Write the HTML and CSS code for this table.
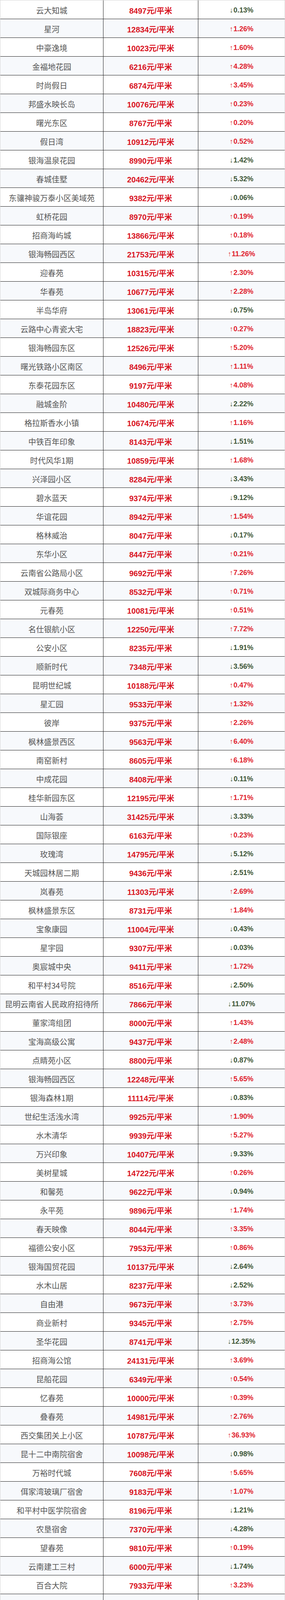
FILE: index.html
```html
<!DOCTYPE html>
<html lang="zh-CN">
<head>
<meta charset="utf-8">
<title>小区房价</title>
<link rel="stylesheet" href="styles.css">
</head>
<body>
<div class="table">
<div class="row"><div class="name">云大知城</div><div class="price">8497元/平米</div><div class="chg dn"><span class="arr">↓</span>0.13%</div></div>
<div class="row"><div class="name">星河</div><div class="price">12834元/平米</div><div class="chg up"><span class="arr">↑</span>1.26%</div></div>
<div class="row"><div class="name">中豪逸境</div><div class="price">10023元/平米</div><div class="chg up"><span class="arr">↑</span>1.60%</div></div>
<div class="row"><div class="name">金福地花园</div><div class="price">6216元/平米</div><div class="chg up"><span class="arr">↑</span>4.28%</div></div>
<div class="row"><div class="name">时尚假日</div><div class="price">6874元/平米</div><div class="chg up"><span class="arr">↑</span>3.45%</div></div>
<div class="row"><div class="name">邦盛水映长岛</div><div class="price">10076元/平米</div><div class="chg up"><span class="arr">↑</span>0.23%</div></div>
<div class="row"><div class="name">曙光东区</div><div class="price">8767元/平米</div><div class="chg up"><span class="arr">↑</span>0.20%</div></div>
<div class="row"><div class="name">假日湾</div><div class="price">10912元/平米</div><div class="chg up"><span class="arr">↑</span>0.52%</div></div>
<div class="row"><div class="name">银海温泉花园</div><div class="price">8990元/平米</div><div class="chg dn"><span class="arr">↓</span>1.42%</div></div>
<div class="row"><div class="name">春城佳墅</div><div class="price">20462元/平米</div><div class="chg dn"><span class="arr">↓</span>5.32%</div></div>
<div class="row"><div class="name">东骧神骏万泰小区美域苑</div><div class="price">9382元/平米</div><div class="chg dn"><span class="arr">↓</span>0.06%</div></div>
<div class="row"><div class="name">虹桥花园</div><div class="price">8970元/平米</div><div class="chg up"><span class="arr">↑</span>0.19%</div></div>
<div class="row"><div class="name">招商海屿城</div><div class="price">13866元/平米</div><div class="chg up"><span class="arr">↑</span>0.18%</div></div>
<div class="row"><div class="name">银海畅园西区</div><div class="price">21753元/平米</div><div class="chg up"><span class="arr">↑</span>11.26%</div></div>
<div class="row"><div class="name">迎春苑</div><div class="price">10315元/平米</div><div class="chg up"><span class="arr">↑</span>2.30%</div></div>
<div class="row"><div class="name">华春苑</div><div class="price">10677元/平米</div><div class="chg up"><span class="arr">↑</span>2.28%</div></div>
<div class="row"><div class="name">半岛华府</div><div class="price">13061元/平米</div><div class="chg dn"><span class="arr">↓</span>0.75%</div></div>
<div class="row"><div class="name">云路中心青瓷大宅</div><div class="price">18823元/平米</div><div class="chg up"><span class="arr">↑</span>0.27%</div></div>
<div class="row"><div class="name">银海畅园东区</div><div class="price">12526元/平米</div><div class="chg up"><span class="arr">↑</span>5.20%</div></div>
<div class="row"><div class="name">曙光铁路小区南区</div><div class="price">8496元/平米</div><div class="chg up"><span class="arr">↑</span>1.11%</div></div>
<div class="row"><div class="name">东泰花园东区</div><div class="price">9197元/平米</div><div class="chg up"><span class="arr">↑</span>4.08%</div></div>
<div class="row"><div class="name">融城金阶</div><div class="price">10480元/平米</div><div class="chg dn"><span class="arr">↓</span>2.22%</div></div>
<div class="row"><div class="name">格拉斯香水小镇</div><div class="price">10674元/平米</div><div class="chg up"><span class="arr">↑</span>1.16%</div></div>
<div class="row"><div class="name">中铁百年印象</div><div class="price">8143元/平米</div><div class="chg dn"><span class="arr">↓</span>1.51%</div></div>
<div class="row"><div class="name">时代风华1期</div><div class="price">10859元/平米</div><div class="chg up"><span class="arr">↑</span>1.68%</div></div>
<div class="row"><div class="name">兴泽园小区</div><div class="price">8284元/平米</div><div class="chg dn"><span class="arr">↓</span>3.43%</div></div>
<div class="row"><div class="name">碧水蓝天</div><div class="price">9374元/平米</div><div class="chg dn"><span class="arr">↓</span>9.12%</div></div>
<div class="row"><div class="name">华谊花园</div><div class="price">8942元/平米</div><div class="chg up"><span class="arr">↑</span>1.54%</div></div>
<div class="row"><div class="name">格林威治</div><div class="price">8047元/平米</div><div class="chg dn"><span class="arr">↓</span>0.17%</div></div>
<div class="row"><div class="name">东华小区</div><div class="price">8447元/平米</div><div class="chg up"><span class="arr">↑</span>0.21%</div></div>
<div class="row"><div class="name">云南省公路局小区</div><div class="price">9692元/平米</div><div class="chg up"><span class="arr">↑</span>7.26%</div></div>
<div class="row"><div class="name">双城际商务中心</div><div class="price">8532元/平米</div><div class="chg up"><span class="arr">↑</span>0.71%</div></div>
<div class="row"><div class="name">元春苑</div><div class="price">10081元/平米</div><div class="chg up"><span class="arr">↑</span>0.51%</div></div>
<div class="row"><div class="name">名仕银航小区</div><div class="price">12250元/平米</div><div class="chg up"><span class="arr">↑</span>7.72%</div></div>
<div class="row"><div class="name">公安小区</div><div class="price">8235元/平米</div><div class="chg dn"><span class="arr">↓</span>1.91%</div></div>
<div class="row"><div class="name">顺新时代</div><div class="price">7348元/平米</div><div class="chg dn"><span class="arr">↓</span>3.56%</div></div>
<div class="row"><div class="name">昆明世纪城</div><div class="price">10188元/平米</div><div class="chg up"><span class="arr">↑</span>0.47%</div></div>
<div class="row"><div class="name">星汇园</div><div class="price">9533元/平米</div><div class="chg up"><span class="arr">↑</span>1.32%</div></div>
<div class="row"><div class="name">彼岸</div><div class="price">9375元/平米</div><div class="chg up"><span class="arr">↑</span>2.26%</div></div>
<div class="row"><div class="name">枫林盛景西区</div><div class="price">9563元/平米</div><div class="chg up"><span class="arr">↑</span>6.40%</div></div>
<div class="row"><div class="name">南窑新村</div><div class="price">8605元/平米</div><div class="chg up"><span class="arr">↑</span>6.18%</div></div>
<div class="row"><div class="name">中成花园</div><div class="price">8408元/平米</div><div class="chg dn"><span class="arr">↓</span>0.11%</div></div>
<div class="row"><div class="name">桂华新园东区</div><div class="price">12195元/平米</div><div class="chg up"><span class="arr">↑</span>1.71%</div></div>
<div class="row"><div class="name">山海荟</div><div class="price">31425元/平米</div><div class="chg dn"><span class="arr">↓</span>3.33%</div></div>
<div class="row"><div class="name">国际银座</div><div class="price">6163元/平米</div><div class="chg up"><span class="arr">↑</span>0.23%</div></div>
<div class="row"><div class="name">玫瑰湾</div><div class="price">14795元/平米</div><div class="chg dn"><span class="arr">↓</span>5.12%</div></div>
<div class="row"><div class="name">天城园林居二期</div><div class="price">9436元/平米</div><div class="chg dn"><span class="arr">↓</span>2.51%</div></div>
<div class="row"><div class="name">岚春苑</div><div class="price">11303元/平米</div><div class="chg up"><span class="arr">↑</span>2.69%</div></div>
<div class="row"><div class="name">枫林盛景东区</div><div class="price">8731元/平米</div><div class="chg up"><span class="arr">↑</span>1.84%</div></div>
<div class="row"><div class="name">宝象康园</div><div class="price">11004元/平米</div><div class="chg dn"><span class="arr">↓</span>0.43%</div></div>
<div class="row"><div class="name">星宇园</div><div class="price">9307元/平米</div><div class="chg dn"><span class="arr">↓</span>0.03%</div></div>
<div class="row"><div class="name">奥宸城中央</div><div class="price">9411元/平米</div><div class="chg up"><span class="arr">↑</span>1.72%</div></div>
<div class="row"><div class="name">和平村34号院</div><div class="price">8516元/平米</div><div class="chg dn"><span class="arr">↓</span>2.50%</div></div>
<div class="row"><div class="name">昆明云南省人民政府招待所</div><div class="price">7866元/平米</div><div class="chg dn"><span class="arr">↓</span>11.07%</div></div>
<div class="row"><div class="name">董家湾组团</div><div class="price">8000元/平米</div><div class="chg up"><span class="arr">↑</span>1.43%</div></div>
<div class="row"><div class="name">宝海高级公寓</div><div class="price">9437元/平米</div><div class="chg up"><span class="arr">↑</span>2.48%</div></div>
<div class="row"><div class="name">点睛苑小区</div><div class="price">8800元/平米</div><div class="chg dn"><span class="arr">↓</span>0.87%</div></div>
<div class="row"><div class="name">银海畅园西区</div><div class="price">12248元/平米</div><div class="chg up"><span class="arr">↑</span>5.65%</div></div>
<div class="row"><div class="name">银海森林1期</div><div class="price">11114元/平米</div><div class="chg dn"><span class="arr">↓</span>0.83%</div></div>
<div class="row"><div class="name">世纪生活浅水湾</div><div class="price">9925元/平米</div><div class="chg up"><span class="arr">↑</span>1.90%</div></div>
<div class="row"><div class="name">水木清华</div><div class="price">9939元/平米</div><div class="chg up"><span class="arr">↑</span>5.27%</div></div>
<div class="row"><div class="name">万兴印象</div><div class="price">10407元/平米</div><div class="chg dn"><span class="arr">↓</span>9.33%</div></div>
<div class="row"><div class="name">美树星城</div><div class="price">14722元/平米</div><div class="chg up"><span class="arr">↑</span>0.26%</div></div>
<div class="row"><div class="name">和馨苑</div><div class="price">9622元/平米</div><div class="chg dn"><span class="arr">↓</span>0.94%</div></div>
<div class="row"><div class="name">永平苑</div><div class="price">9896元/平米</div><div class="chg up"><span class="arr">↑</span>1.74%</div></div>
<div class="row"><div class="name">春天映像</div><div class="price">8044元/平米</div><div class="chg up"><span class="arr">↑</span>3.35%</div></div>
<div class="row"><div class="name">福德公安小区</div><div class="price">7953元/平米</div><div class="chg up"><span class="arr">↑</span>0.86%</div></div>
<div class="row"><div class="name">银海国贸花园</div><div class="price">10137元/平米</div><div class="chg dn"><span class="arr">↓</span>2.64%</div></div>
<div class="row"><div class="name">水木山居</div><div class="price">8237元/平米</div><div class="chg dn"><span class="arr">↓</span>2.52%</div></div>
<div class="row"><div class="name">自由港</div><div class="price">9673元/平米</div><div class="chg up"><span class="arr">↑</span>3.73%</div></div>
<div class="row"><div class="name">商业新村</div><div class="price">9345元/平米</div><div class="chg up"><span class="arr">↑</span>2.75%</div></div>
<div class="row"><div class="name">圣华花园</div><div class="price">8741元/平米</div><div class="chg dn"><span class="arr">↓</span>12.35%</div></div>
<div class="row"><div class="name">招商海公馆</div><div class="price">24131元/平米</div><div class="chg up"><span class="arr">↑</span>3.69%</div></div>
<div class="row"><div class="name">昆船花园</div><div class="price">6349元/平米</div><div class="chg up"><span class="arr">↑</span>0.54%</div></div>
<div class="row"><div class="name">忆春苑</div><div class="price">10000元/平米</div><div class="chg up"><span class="arr">↑</span>0.39%</div></div>
<div class="row"><div class="name">叠春苑</div><div class="price">14981元/平米</div><div class="chg up"><span class="arr">↑</span>2.76%</div></div>
<div class="row"><div class="name">西交集团关上小区</div><div class="price">10787元/平米</div><div class="chg up"><span class="arr">↑</span>36.93%</div></div>
<div class="row"><div class="name">昆十二中南院宿舍</div><div class="price">10098元/平米</div><div class="chg dn"><span class="arr">↓</span>0.98%</div></div>
<div class="row"><div class="name">万裕时代城</div><div class="price">7608元/平米</div><div class="chg up"><span class="arr">↑</span>5.65%</div></div>
<div class="row"><div class="name">佴家湾玻璃厂宿舍</div><div class="price">9183元/平米</div><div class="chg up"><span class="arr">↑</span>1.07%</div></div>
<div class="row"><div class="name">和平村中医学院宿舍</div><div class="price">8196元/平米</div><div class="chg dn"><span class="arr">↓</span>1.21%</div></div>
<div class="row"><div class="name">农垦宿舍</div><div class="price">7370元/平米</div><div class="chg dn"><span class="arr">↓</span>4.28%</div></div>
<div class="row"><div class="name">望春苑</div><div class="price">9810元/平米</div><div class="chg up"><span class="arr">↑</span>0.19%</div></div>
<div class="row"><div class="name">云南建工三村</div><div class="price">6000元/平米</div><div class="chg dn"><span class="arr">↓</span>1.74%</div></div>
<div class="row"><div class="name">百合大院</div><div class="price">7933元/平米</div><div class="chg up"><span class="arr">↑</span>3.23%</div></div>
<div class="row"><div class="name">环南新村</div><div class="price">9883元/平米</div><div class="chg up"><span class="arr">↑</span>1.91%</div></div>
<div class="row"><div class="name">星河明居</div><div class="price">8854元/平米</div><div class="chg up"><span class="arr">↑</span>0.10%</div></div>
<div class="row"><div class="name">澜沧江花园</div><div class="price">17650元/平米</div><div class="chg up"><span class="arr">↑</span>0.60%</div></div>
<div class="row"><div class="name">董家湾小区</div><div class="price">8666元/平米</div><div class="chg dn"><span class="arr">↓</span>0.18%</div></div>
<div class="row"><div class="name">鑫益广源小区西区</div><div class="price">9182元/平米</div><div class="chg up"><span class="arr">↑</span>1.17%</div></div>
<div class="row"><div class="name">千紫园</div><div class="price">10124元/平米</div><div class="chg up"><span class="arr">↑</span>1.54%</div></div>
<div class="row"><div class="name">华泰花园</div><div class="price">8670元/平米</div><div class="chg up"><span class="arr">↑</span>12.28%</div></div>
<div class="row"><div class="name">云路花园</div><div class="price">9101元/平米</div><div class="chg up"><span class="arr">↑</span>0.62%</div></div>
<div class="row"><div class="name">官房滇池向阳院</div><div class="price">17842元/平米</div><div class="chg up"><span class="arr">↑</span>0.61%</div></div>
<div class="row"><div class="name">竞达星光雅园</div><div class="price">9572元/平米</div><div class="chg up"><span class="arr">↑</span>1.67%</div></div>
<div class="row"><div class="name">银海花园北区</div><div class="price">8441元/平米</div><div class="chg dn"><span class="arr">↓</span>0.54%</div></div>
<div class="row"><div class="name">荣发花园</div><div class="price">8000元/平米</div><div class="chg up"><span class="arr">↑</span>0.40%</div></div>
<div class="row"><div class="name">金盾苑</div><div class="price">8786元/平米</div><div class="chg up"><span class="arr">↑</span>1.46%</div></div>
<div class="row"><div class="name">东方上城</div><div class="price">7538元/平米</div><div class="chg dn"><span class="arr">↓</span>19.14%</div></div>
<div class="row"><div class="name">昆铁南坝小区</div><div class="price">8117元/平米</div><div class="chg dn"><span class="arr">↓</span>2.26%</div></div>
</div>
</body>
</html>
```
FILE: styles.css
```css
html, body {
  margin: 0;
  padding: 0;
  background: #ffffff;
}

.table {
  width: 730px;
  box-sizing: border-box;
  border-top: 1px solid #d4d4d4;
  border-left: 1px solid #d4d4d4;
  border-right: 1px solid #d4d4d4;
}

.row {
  display: grid;
  grid-template-columns: 264px 243px 1fr;
  height: 48px;
  box-sizing: border-box;
  border-bottom: 1px solid #1c1c1c;
  background: #ffffff;
  overflow: hidden;
}

.row:nth-child(even) {
  background: #f7f9fc;
}

.row > div {
  display: flex;
  align-items: center;
  justify-content: center;
  padding-top: 3px;
  box-sizing: border-box;
  white-space: nowrap;
  min-height: 0;
}

.name {
  border-right: 1px solid #1c1c1c;
  font-family: "Noto Sans CJK SC", "Liberation Sans", sans-serif;
  font-size: 20px;
  color: #555555;
  font-weight: 400;
}

.price {
  border-right: 1px solid #1c1c1c;
  font-family: "Liberation Sans", "Noto Sans CJK SC", sans-serif;
  font-size: 20px;
  font-weight: 700;
  color: #d9141f;
}

.chg {
  font-family: "Liberation Sans", "Noto Sans CJK SC", sans-serif;
  font-size: 18px;
  font-weight: 700;
}

.arr {
  font-weight: 400;
  margin-right: 1px;
}

.chg.up {
  color: #e0202c;
}

.chg.dn {
  color: #3d5536;
}
```
